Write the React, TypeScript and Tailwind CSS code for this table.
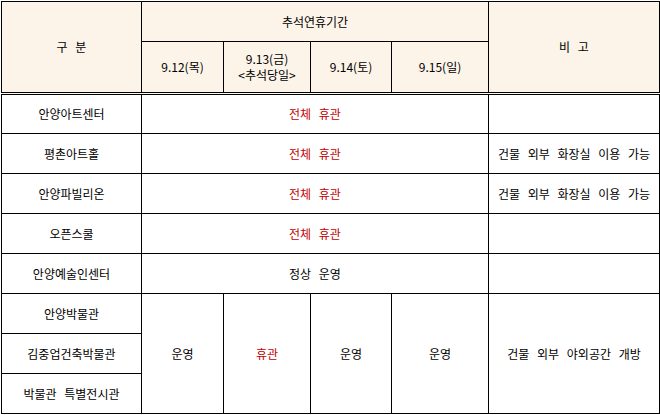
import React from 'react';

const cell = 'border border-black text-center align-middle font-normal p-0';
const head = `${cell} bg-[#fcf4e8]`;
const dbl = 'border-b-[3px] [border-bottom-style:double]';
const red = 'text-[#c00000]';

const closedAll = [
	{ name: '안양아트센터', note: '' },
	{ name: '평촌아트홀', note: '건물 외부 화장실 이용 가능' },
	{ name: '안양파빌리온', note: '건물 외부 화장실 이용 가능' },
	{ name: '오픈스쿨', note: '' },
];

export default function App() {
	return (
		<div
			className="min-h-screen bg-white pl-px pt-px text-[12px] leading-[16px] text-black [word-spacing:5px]"
			style={{ fontFamily: '"Noto Sans CJK KR", "Noto Sans", sans-serif' }}
		>
			<table className="w-[658px] table-fixed border-collapse">
				<colgroup>
					<col className="w-[140px]" />
					<col className="w-[82px]" />
					<col className="w-[87px]" />
					<col className="w-[81px]" />
					<col className="w-[97px]" />
					<col className="w-[171px]" />
				</colgroup>
				<thead>
					<tr className="h-[40px]">
						<th rowSpan={2} className={`${head} ${dbl}`}>
							구 분
						</th>
						<th colSpan={4} className={head}>
							추석연휴기간
						</th>
						<th rowSpan={2} className={`${head} ${dbl}`}>
							비 고
						</th>
					</tr>
					<tr className="h-[52px]">
						<th className={`${head} ${dbl}`}>9.12(목)</th>
						<th className={`${head} ${dbl}`}>
							<div>9.13(금)</div>
							<div>&lt;추석당일&gt;</div>
						</th>
						<th className={`${head} ${dbl}`}>9.14(토)</th>
						<th className={`${head} ${dbl}`}>9.15(일)</th>
					</tr>
				</thead>
				<tbody>
					{closedAll.map((row) => (
						<tr key={row.name} className="h-[40px]">
							<td className={cell}>{row.name}</td>
							<td colSpan={4} className={`${cell} ${red}`}>
								전체 휴관
							</td>
							<td className={cell}>{row.note}</td>
						</tr>
					))}
					<tr className="h-[40px]">
						<td className={cell}>안양예술인센터</td>
						<td colSpan={4} className={cell}>
							정상 운영
						</td>
						<td className={cell}></td>
					</tr>
					<tr className="h-[40px]">
						<td className={cell}>안양박물관</td>
						<td rowSpan={3} className={cell}>
							운영
						</td>
						<td rowSpan={3} className={`${cell} ${red}`}>
							휴관
						</td>
						<td rowSpan={3} className={cell}>
							운영
						</td>
						<td rowSpan={3} className={cell}>
							운영
						</td>
						<td rowSpan={3} className={cell}>
							건물 외부 야외공간 개방
						</td>
					</tr>
					<tr className="h-[40px]">
						<td className={cell}>김중업건축박물관</td>
					</tr>
					<tr className="h-[40px]">
						<td className={cell}>박물관 특별전시관</td>
					</tr>
				</tbody>
			</table>
		</div>
	);
}
